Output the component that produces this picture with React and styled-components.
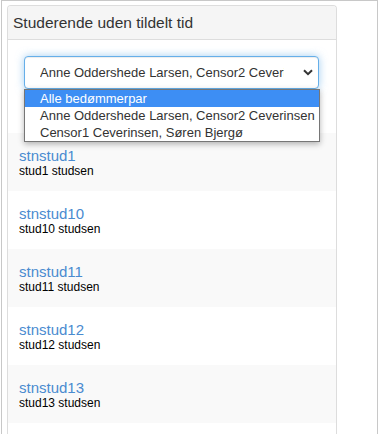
import React from 'react';
import styled, { createGlobalStyle } from 'styled-components';

const options = [
  'Alle bedømmerpar',
  'Anne Oddershede Larsen, Censor2 Ceverinsen',
  'Censor1 Ceverinsen, Søren Bjergø',
];

const students = [
  { user: 'stnstud1', name: 'stud1 studsen' },
  { user: 'stnstud10', name: 'stud10 studsen' },
  { user: 'stnstud11', name: 'stud11 studsen' },
  { user: 'stnstud12', name: 'stud12 studsen' },
  { user: 'stnstud13', name: 'stud13 studsen' },
];

const App = () => (
  <>
    <GlobalStyle />
    <Frame>
      <Panel>
        <PanelHeading>Studerende uden tildelt tid</PanelHeading>
        <PanelBody>
          <SelectWrap>
            <SelectBox>
              <SelectText>Anne Oddershede Larsen, Censor2 Ceverinsen</SelectText>
              <svg width="10" height="7" viewBox="0 0 10 7">
                <path d="M1 1.2 L5 5.2 L9 1.2" fill="none" stroke="#333" strokeWidth="2" />
              </svg>
            </SelectBox>
            <OptionList>
              {options.map((o, i) => (
                <Option key={o} active={i === 0}>
                  {o}
                </Option>
              ))}
            </OptionList>
          </SelectWrap>
        </PanelBody>
        <StudentList>
          {students.map((s) => (
            <StudentRow key={s.user}>
              <UserName href="#">{s.user}</UserName>
              <FullName>{s.name}</FullName>
            </StudentRow>
          ))}
        </StudentList>
      </Panel>
    </Frame>
  </>
);

const GlobalStyle = createGlobalStyle`
  html, body {
    margin: 0;
    background: #fff;
    font-family: "Liberation Sans", Arial, sans-serif;
    color: #333;
  }
  * {
    box-sizing: border-box;
  }
`;

const Frame = styled.div`
  margin-left: 1px;
  width: 377px;
  height: 434px;
  overflow: hidden;
  border: 1px solid #c8c8c8;
  border-bottom: none;
  padding: 4px 0 0 5px;
`;

const Panel = styled.div`
  width: 330px;
  min-height: 430px;
  border: 1px solid #ddd;
  border-bottom: none;
  border-radius: 4px 4px 0 0;
  background: #fff;
`;

const PanelHeading = styled.div`
  background: #f5f5f5;
  border-bottom: 1px solid #ddd;
  border-radius: 3px 3px 0 0;
  padding: 7px 5px;
  font-size: 15.5px;
  line-height: 19px;
  color: #333;
`;

const PanelBody = styled.div`
  padding: 16px 16px 44px 16px;
`;

const SelectWrap = styled.div`
  position: relative;
  width: 295px;
`;

const SelectBox = styled.div`
  display: flex;
  align-items: center;
  height: 33px;
  padding: 0 5px 0 15px;
  border: 1px solid #66afe9;
  border-radius: 4px;
  background: #fff;
  box-shadow: inset 0 1px 1px rgba(0, 0, 0, 0.075), 0 0 8px rgba(102, 175, 233, 0.6);

  svg {
    flex: none;
    margin-left: auto;
  }
`;

const SelectText = styled.span`
  width: 244px;
  overflow: hidden;
  white-space: nowrap;
  font-size: 13px;
  color: #333;
`;

const OptionList = styled.div`
  position: absolute;
  top: 100%;
  left: 0;
  width: 296px;
  border: 1px solid #767676;
  background: #fff;
  box-shadow: 0 2px 6px rgba(0, 0, 0, 0.3);
  z-index: 2;
`;

const Option = styled.div`
  height: 17px;
  line-height: 17px;
  padding-left: 15px;
  font-size: 13px;
  white-space: nowrap;
  color: ${(p) => (p.active ? '#fff' : '#333')};
  background: ${(p) => (p.active ? '#3d8ef4' : '#fff')};
`;

const StudentList = styled.div`
  display: flex;
  flex-direction: column;
`;

const StudentRow = styled.div`
  height: 58px;
  padding: 14px 11px 0;

  &:nth-child(odd) {
    background: #f9f9f9;
  }
`;

const UserName = styled.a`
  display: block;
  font-size: 15px;
  line-height: 17px;
  color: #4a8bd0;
  text-decoration: none;
`;

const FullName = styled.div`
  font-size: 12px;
  line-height: 14px;
  color: #000;
`;

export default App;
